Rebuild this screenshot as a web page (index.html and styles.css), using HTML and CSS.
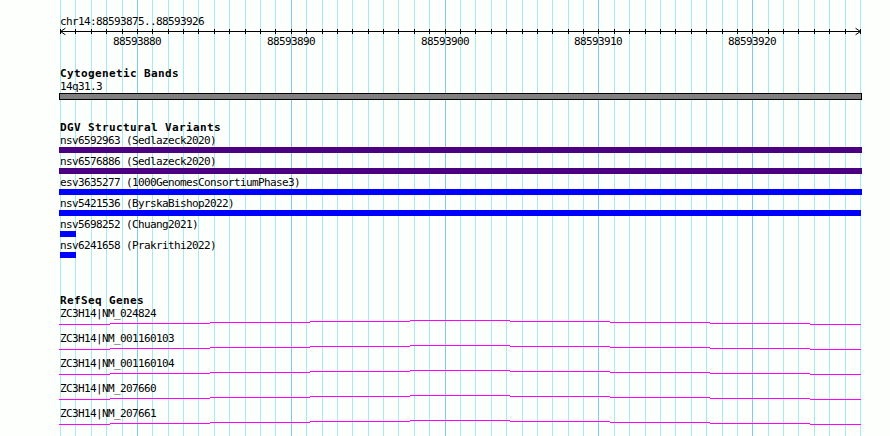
FILE: index.html
```html
<!DOCTYPE html>
<html>
<head>
<meta charset="utf-8">
<link rel="stylesheet" href="styles.css">
</head>
<body>
<div class="page">
  <svg class="grid" width="890" height="436" viewBox="0 0 890 436" shape-rendering="crispEdges">
    <path class="gl" d="M60.5 0V436M75.5 0V436M91.5 0V436M106.5 0V436M122.5 0V436M152.5 0V436M168.5 0V436M183.5 0V436M198.5 0V436M214.5 0V436M229.5 0V436M245.5 0V436M260.5 0V436M275.5 0V436M306.5 0V436M322.5 0V436M337.5 0V436M352.5 0V436M368.5 0V436M383.5 0V436M398.5 0V436M414.5 0V436M429.5 0V436M460.5 0V436M475.5 0V436M491.5 0V436M506.5 0V436M522.5 0V436M537.5 0V436M552.5 0V436M568.5 0V436M583.5 0V436M614.5 0V436M629.5 0V436M645.5 0V436M660.5 0V436M675.5 0V436M691.5 0V436M706.5 0V436M722.5 0V436M737.5 0V436M768.5 0V436M783.5 0V436M798.5 0V436M814.5 0V436M829.5 0V436M845.5 0V436M860.5 0V436"/>
    <path class="gm" d="M137.5 0V436M291.5 0V436M445.5 0V436M598.5 0V436M752.5 0V436"/>
  </svg>

  <div class="content">
    <section class="ruler">
      <div class="txt">chr14:88593875..88593926</div>
      <svg class="axis" width="890" height="20" viewBox="0 0 890 20">
        <g shape-rendering="crispEdges" class="ink">
          <path d="M60 4.5H861"/>
          <path d="M60.5 2V7M75.5 2V7M91.5 2V7M106.5 2V7M122.5 2V7M137.5 2V7M152.5 2V7M168.5 2V7M183.5 2V7M198.5 2V7M214.5 2V7M229.5 2V7M245.5 2V7M260.5 2V7M275.5 2V7M291.5 2V7M306.5 2V7M322.5 2V7M337.5 2V7M352.5 2V7M368.5 2V7M383.5 2V7M398.5 2V7M414.5 2V7M429.5 2V7M445.5 2V7M460.5 2V7M475.5 2V7M491.5 2V7M506.5 2V7M522.5 2V7M537.5 2V7M552.5 2V7M568.5 2V7M583.5 2V7M598.5 2V7M614.5 2V7M629.5 2V7M645.5 2V7M660.5 2V7M675.5 2V7M691.5 2V7M706.5 2V7M722.5 2V7M737.5 2V7M752.5 2V7M768.5 2V7M783.5 2V7M798.5 2V7M814.5 2V7M829.5 2V7M845.5 2V7M860.5 2V7"/>
        </g>
        <path class="ink arrow" d="M65 1.5L60.5 4.5L65 7.5M856 1.5L860.5 4.5L856 7.5"/>
        <text class="tick" x="137" y="18">88593880</text>
        <text class="tick" x="291" y="18">88593890</text>
        <text class="tick" x="445" y="18">88593900</text>
        <text class="tick" x="598" y="18">88593910</text>
        <text class="tick" x="752" y="18">88593920</text>
      </svg>
    </section>

    <section class="track cyto">
      <div class="txt title">Cytogenetic Bands</div>
      <div class="txt label">14q31.3</div>
      <div class="band"></div>
    </section>

    <section class="track dgv">
      <div class="txt title">DGV Structural Variants</div>
      <div class="sv-list">
        <div class="sv">
          <div class="txt">nsv6592963 (Sedlazeck2020)</div>
          <div class="sv-bar purple" style="width:803px"></div>
        </div>
        <div class="sv">
          <div class="txt">nsv6576886 (Sedlazeck2020)</div>
          <div class="sv-bar purple" style="width:803px"></div>
        </div>
        <div class="sv">
          <div class="txt">esv3635277 (1000GenomesConsortiumPhase3)</div>
          <div class="sv-bar blue" style="width:803px"></div>
        </div>
        <div class="sv">
          <div class="txt">nsv5421536 (ByrskaBishop2022)</div>
          <div class="sv-bar blue" style="width:802px"></div>
        </div>
        <div class="sv">
          <div class="txt">nsv5698252 (Chuang2021)</div>
          <div class="sv-bar blue short"></div>
        </div>
        <div class="sv">
          <div class="txt">nsv6241658 (Prakrithi2022)</div>
          <div class="sv-bar blue short"></div>
        </div>
      </div>
    </section>

    <section class="track refseq">
      <div class="txt title">RefSeq Genes</div>
      <div class="genes">
        <div class="gene">
          <div class="txt">ZC3H14|NM_024824</div>
          <svg class="model" width="890" height="14" viewBox="0 0 890 14" shape-rendering="crispEdges"><path d="M59 5.5H110M110 4.5H210M210 3.5H310M310 2.5H410M410 1.5H510M510 2.5H610M610 3.5H710M710 4.5H810M810 5.5H861"/></svg>
        </div>
        <div class="gene">
          <div class="txt">ZC3H14|NM_001160103</div>
          <svg class="model" width="890" height="14" viewBox="0 0 890 14" shape-rendering="crispEdges"><path d="M59 5.5H110M110 4.5H210M210 3.5H310M310 2.5H410M410 1.5H510M510 2.5H610M610 3.5H710M710 4.5H810M810 5.5H861"/></svg>
        </div>
        <div class="gene">
          <div class="txt">ZC3H14|NM_001160104</div>
          <svg class="model" width="890" height="14" viewBox="0 0 890 14" shape-rendering="crispEdges"><path d="M59 5.5H110M110 4.5H210M210 3.5H310M310 2.5H410M410 1.5H510M510 2.5H610M610 3.5H710M710 4.5H810M810 5.5H861"/></svg>
        </div>
        <div class="gene">
          <div class="txt">ZC3H14|NM_207660</div>
          <svg class="model" width="890" height="14" viewBox="0 0 890 14" shape-rendering="crispEdges"><path d="M59 5.5H110M110 4.5H210M210 3.5H310M310 2.5H410M410 1.5H510M510 2.5H610M610 3.5H710M710 4.5H810M810 5.5H861"/></svg>
        </div>
        <div class="gene">
          <div class="txt">ZC3H14|NM_207661</div>
          <svg class="model" width="890" height="14" viewBox="0 0 890 14" shape-rendering="crispEdges"><path d="M59 5.5H110M110 4.5H210M210 3.5H310M310 2.5H410M410 1.5H510M510 2.5H610M610 3.5H710M710 4.5H810M810 5.5H861"/></svg>
        </div>
      </div>
    </section>
  </div>
</div>
</body>
</html>
```

FILE: styles.css
```css
html, body {
  margin: 0;
  padding: 0;
}

body {
  background: #fdfffd;
  width: 890px;
  height: 436px;
  overflow: hidden;
}

.page {
  position: relative;
  width: 890px;
  height: 436px;
  box-sizing: border-box;
  padding-top: 16px;
  font-family: "DejaVu Sans Mono", "Liberation Mono", monospace;
  font-size: 11px;
  line-height: 11px;
  letter-spacing: -0.62px;
  color: #000;
}

.grid {
  position: absolute;
  left: 0;
  top: 0;
  z-index: 0;
}

.gl {
  stroke: #a6ebef;
  stroke-width: 1;
  fill: none;
}

.gm {
  stroke: #7fc9e9;
  stroke-width: 1;
  fill: none;
}

.content {
  position: relative;
  z-index: 1;
}

.txt {
  padding-left: 60px;
  height: 11px;
  white-space: pre;
}

.title {
  font-weight: bold;
  letter-spacing: 0.38px;
}

.axis {
  display: block;
}

.ink {
  stroke: #000;
  stroke-width: 1;
  fill: none;
}

.arrow {
  stroke-linecap: square;
}

.tick {
  font-family: "DejaVu Sans Mono", "Liberation Mono", monospace;
  font-size: 11px;
  letter-spacing: -0.62px;
  text-anchor: middle;
  fill: #000;
}

.cyto {
  margin-top: 21px;
}

.cyto .label {
  margin-top: 2px;
}

.band {
  margin: 1px 0 0 59px;
  width: 803px;
  height: 7px;
  box-sizing: border-box;
  border: 1px solid #000;
  background: #808080;
}

.dgv {
  margin-top: 22px;
}

.sv-list {
  margin-top: 2px;
  padding-bottom: 3px;
}

.sv {
  padding-bottom: 3px;
}

.sv:last-child {
  padding-bottom: 0;
}

.sv-bar {
  height: 6px;
  margin: 1px 0 0 59px;
}

.sv-bar.short {
  width: 16px;
  margin-left: 60px;
}

.purple {
  background: #4b0082;
}

.blue {
  background: #0000ff;
}

.refseq {
  margin-top: 34px;
}

.genes {
  margin-top: 2px;
}

.model {
  display: block;
}

.model path {
  stroke: #ff00ff;
  stroke-width: 1;
  fill: none;
}
```
